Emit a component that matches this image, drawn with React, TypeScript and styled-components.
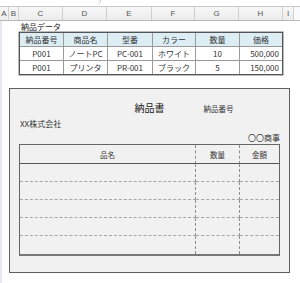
import styled, { createGlobalStyle } from 'styled-components';

const Global = createGlobalStyle`
  html, body {
    margin: 0;
    padding: 0;
    background: #fff;
  }
  body {
    width: 300px;
    height: 283px;
    overflow: hidden;
    font-family: "Noto Sans CJK JP", "Liberation Sans", sans-serif;
    color: #333;
  }
`;

const TopBar = styled.div`
  height: 6px;
  border-bottom: 1px solid #c9c9c9;
  display: flex;
  overflow: hidden;
  background: #fff;
`;

const NameBox = styled.div`
  width: 100px;
  height: 5px;
  border-right: 1px solid #c9c9c9;
  border-bottom-right-radius: 5px;
`;

const Cols = styled.div`
  display: grid;
  grid-template-columns: 9px 10px 44px 44px 45px 43px 44px 44px 11px 1fr;
  height: 13px;
  background: linear-gradient(#f7f7f7, #ececec);
  border-bottom: 1px solid #b8b8b8;
`;

const ColHead = styled.div`
  border-right: 1px solid #d0d0d0;
  display: flex;
  align-items: center;
  justify-content: center;
  font-family: "Liberation Sans", sans-serif;
  font-size: 8px;
  color: #555;
  &:last-child {
    border-right: none;
    background: #fafafa;
  }
`;

const Sheet = styled.div`
  border-left: 2px solid #e4e7ec;
  padding: 0 0 0 17px;
  height: 262px;
`;

const Caption = styled.div`
  height: 11px;
  font-size: 8px;
  line-height: 12px;
  padding-left: 2px;
  color: #222;
`;

const DataTable = styled.div`
  width: 262px;
  display: grid;
  grid-template-columns: 44px 44px 45px 43px 44px 1fr;
  border: 1px solid #555;
  box-shadow: 0 0 0 0.5px #777;
`;

const DataCell = styled.div<{ $head?: boolean; $right?: boolean }>`
  height: 13px;
  border-right: 1px solid #9a9a9a;
  border-bottom: 1px solid #9a9a9a;
  background: ${({ $head }) => ($head ? '#dcedf4' : '#fff')};
  display: flex;
  align-items: center;
  justify-content: ${({ $right }) => ($right ? 'flex-end' : 'center')};
  padding-right: ${({ $right }) => ($right ? '3px' : '0')};
  font-size: 8px;
  color: #333;
  &:nth-child(6n) {
    border-right: none;
  }
  &:nth-last-child(-n + 6) {
    border-bottom: none;
  }
`;

const Slip = styled.div`
  margin: 13px 0 0 -10px;
  width: 281px;
  height: 185px;
  border: 1.5px solid #5e5e5e;
  background: #f1f1f1;
  padding: 12px 9px 0;
  box-sizing: border-box;
`;

const TitleRow = styled.div`
  display: grid;
  grid-template-columns: 1fr auto 1fr;
  height: 14px;
  align-items: center;
`;

const Title = styled.div`
  font-size: 10px;
  color: #222;
  transform: translateY(-1px);
`;

const SlipNo = styled.div`
  font-size: 7.5px;
  padding-left: 39px;
  color: #333;
`;

const Line = styled.div<{ $right?: boolean }>`
  height: 10px;
  margin-top: 4px;
  font-size: 8px;
  line-height: 10px;
  color: #333;
  text-align: ${({ $right }) => ($right ? 'right' : 'left')};
  padding-left: ${({ $right }) => ($right ? '0' : '1px')};
`;

const Items = styled.div`
  margin-top: 1px;
  display: grid;
  grid-template-columns: 176px 44px 1fr;
  grid-template-rows: 19px repeat(5, 18px);
  border: 1px solid #666;
  border-bottom: 2px solid #777;
  box-sizing: border-box;
  height: 112px;
`;

const ItemCell = styled.div<{ $head?: boolean }>`
  border-right: 1px dashed #8f8f8f;
  border-bottom: ${({ $head }) => ($head ? '1px solid #555' : '1px dashed #a5a5a5')};
  display: flex;
  align-items: center;
  justify-content: center;
  font-size: 7.5px;
  color: #333;
  &:nth-child(3n) {
    border-right: none;
  }
  &:nth-last-child(-n + 3) {
    border-bottom: none;
  }
`;

const letters = ['A', 'B', 'C', 'D', 'E', 'F', 'G', 'H', 'I', ''];

const rows = [
  ['納品番号', '商品名', '型番', 'カラー', '数量', '価格'],
  ['P001', 'ノートPC', 'PC-001', 'ホワイト', '10', '500,000'],
  ['P001', 'プリンタ', 'PR-001', 'ブラック', '5', '150,000'],
];

export default function App() {
  return (
    <>
      <Global />
      <TopBar>
        <NameBox />
      </TopBar>
      <Cols>
        {letters.map((l, i) => (
          <ColHead key={i}>{l}</ColHead>
        ))}
      </Cols>
      <Sheet>
        <Caption>納品データ</Caption>
        <DataTable>
          {rows.map((r, ri) =>
            r.map((v, ci) => (
              <DataCell key={ri + '-' + ci} $head={ri === 0} $right={ri > 0 && ci === 5}>
                {v}
              </DataCell>
            ))
          )}
        </DataTable>
        <Slip>
          <TitleRow>
            <span />
            <Title>納品書</Title>
            <SlipNo>納品番号</SlipNo>
          </TitleRow>
          <Line>XX株式会社</Line>
          <Line $right>〇〇商事</Line>
          <Items>
            <ItemCell $head>品名</ItemCell>
            <ItemCell $head>数量</ItemCell>
            <ItemCell $head>金額</ItemCell>
            {Array.from({ length: 15 }).map((_, i) => (
              <ItemCell key={i} />
            ))}
          </Items>
        </Slip>
      </Sheet>
    </>
  );
}
